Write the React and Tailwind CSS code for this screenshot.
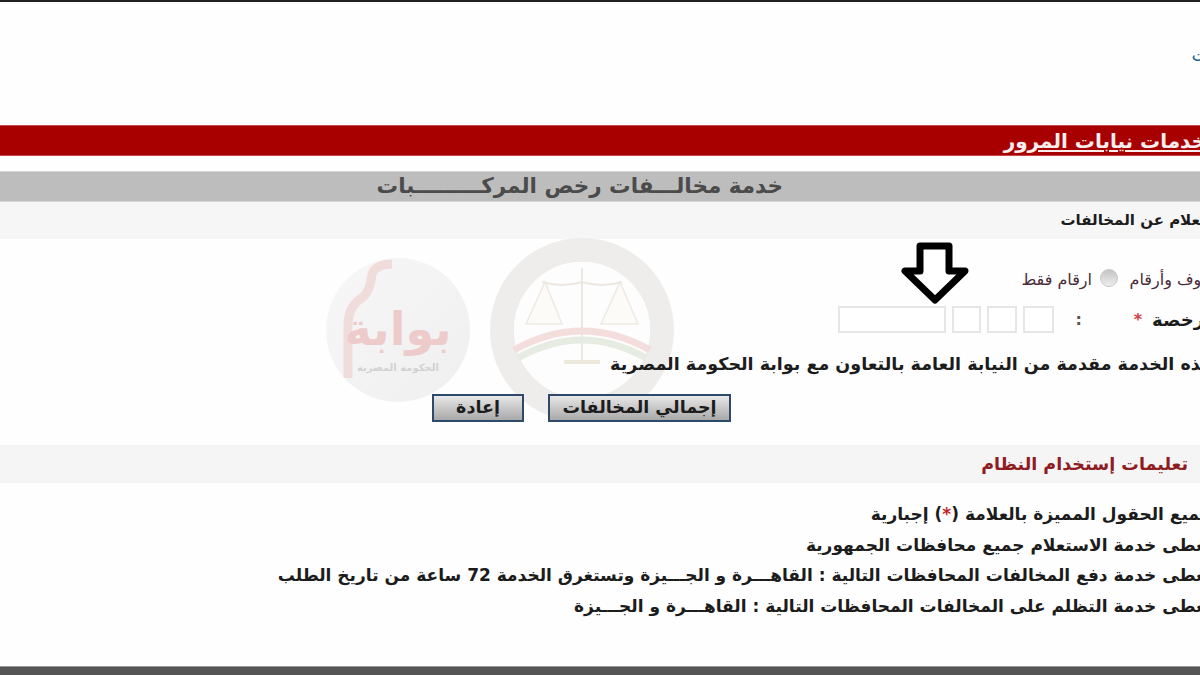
import React from 'react';

const notes = [
    <>جميع الحقول المميزة بالعلامة (<span className="text-[#c0272d]">*</span>) إجبارية</>,
    'تغطى خدمة الاستعلام جميع محافظات الجمهورية',
    'تغطى خدمة دفع المخالفات المحافظات التالية : القاهـــرة و الجـــيزة وتستغرق الخدمة 72 ساعة من تاريخ الطلب',
    'تغطى خدمة التظلم على المخالفات المحافظات التالية : القاهـــرة و الجـــيزة',
];

const Watermarks = () => (
    <div dir="ltr" className="absolute left-[326px] top-[238px] flex items-center gap-[20px] pointer-events-none">
        <div className="relative w-[144px] h-[144px] rounded-full bg-gradient-to-br from-[#f7f7f7] to-[#efefef] flex flex-col items-center overflow-hidden">
            <svg className="absolute left-0 top-0" width="144" height="144" viewBox="0 0 144 144" fill="none">
                <path d="M22 120V68Q22 48 36 40Q44 34 46 16Q50 6 66 6" stroke="#f1dcdc" strokeWidth="9" />
            </svg>
            <span dir="rtl" className="relative font-bold text-[46px] leading-none text-[#eecbcb] mt-[48px] whitespace-nowrap">بوابة</span>
            <span dir="rtl" className="relative font-bold text-[10px] text-[#d2d2d2] mt-[8px] whitespace-nowrap">الحكومة المصرية</span>
        </div>
        <svg width="184" height="184" viewBox="0 0 184 184" fill="none">
            <circle cx="92" cy="92" r="80" stroke="#efedeb" strokeWidth="24" />
            <circle cx="92" cy="92" r="68" fill="#fdfdfd" />
            <path d="M92 30V122M52 44Q72 50 92 44Q112 50 132 44" stroke="#ece8e0" strokeWidth="2" />
            <path d="M55 44L36 86H72ZM130 44L111 86H148Z" stroke="#eeeae2" strokeWidth="1.5" fill="#fcfbf8" />
            <path d="M74 124H110" stroke="#eee9dd" strokeWidth="4" />
            <path d="M24 112Q92 74 160 112" stroke="#f3dddd" strokeWidth="7" />
            <path d="M28 120Q92 84 156 120" stroke="#e6ece2" strokeWidth="7" />
        </svg>
    </div>
);

const DownArrow = () => (
    <svg className="absolute left-[900px] top-[241px]" width="70" height="64" viewBox="0 0 70 64" fill="#fff" stroke="#000" strokeWidth="7" strokeLinejoin="round">
        <path d="M20 5H49V30H65L35 59L5 30H20Z" />
    </svg>
);

const App = () => {
    return (
        <div dir="rtl" className="relative w-[1200px] h-[675px] overflow-hidden bg-[#fefefe] font-['DejaVu_Sans',sans-serif] text-[#1c1c1c] flex flex-col">
            <div className="h-[2px] bg-[#222] shrink-0" />

            {/* header */}
            <div className="h-[123px] shrink-0 pt-[42px]">
                <p className="-mr-[55px] text-[18px] leading-[22px] text-[#2a6496]">الخدمات</p>
            </div>

            <div className="h-[31px] shrink-0 bg-[#a80000] border-y border-[#c9464a] flex items-center">
                <a className="-mr-[6px] text-[20px] font-bold text-[#fbeeee] underline underline-offset-2 whitespace-nowrap">خدمات نيابات المرور</a>
            </div>

            <div className="h-[15px] shrink-0" />

            <div className="h-[31px] shrink-0 bg-[#bdbdbd] border-y border-[#d6d6d6] flex items-center">
                <h1 className="mr-[417px] text-[21.5px] font-bold text-[#4b4b4b] whitespace-nowrap">خدمة مخالـــفات رخص المركـــــــــبات</h1>
            </div>

            <div className="h-[37px] shrink-0 bg-[#f6f6f6] flex items-center">
                <h2 className="-mr-[26px] text-[15px] font-bold whitespace-nowrap">إستعلام عن المخالفات</h2>
            </div>

            {/* form */}
            <div className="relative z-10 h-[206px] shrink-0 flex flex-col">
                <div className="flex items-center mt-[30px] h-[22px] text-[16px] text-[#4a2b3a]">
                    <span className="-mr-[20px] w-[90px] shrink-0 whitespace-nowrap">حروف وأرقام</span>
                    <span className="mr-[12px] ml-[8px] -mt-[4px] w-[18px] h-[18px] rounded-full bg-gradient-to-b from-[#c4c4c4] to-[#eeeeee] border border-[#c8c8c8] shrink-0" />
                    <span className="whitespace-nowrap">ارقام فقط</span>
                </div>

                <div className="flex items-center mt-[15px] h-[27px]">
                    <span className="w-[52px] -mr-[4px] shrink-0 text-[18px] font-bold whitespace-nowrap">رخصة</span>
                    <span className="w-[12px] mr-[10px] shrink-0 text-[#d23c48] font-bold text-[16px]">*</span>
                    <span className="w-[76px] pr-[48px] shrink-0 text-[16px] font-bold text-[#555]">:</span>
                    <div className="flex gap-[6px] h-[27px]">
                        <input aria-label="1" className="w-[31px] bg-white border-2 border-[#e6e6e6]" />
                        <input aria-label="2" className="w-[30px] bg-white border-2 border-[#e6e6e6]" />
                        <input aria-label="3" className="w-[29px] bg-white border-2 border-[#e6e6e6]" />
                        <input aria-label="4" className="w-[108px] bg-white border-2 border-[#e6e6e6]" />
                    </div>
                </div>

                <p className="mt-[19px] -mr-[13px] text-[17.5px] leading-[24px] font-bold whitespace-nowrap">هذه الخدمة مقدمة من النيابة العامة بالتعاون مع بوابة الحكومة المصرية</p>

                <div className="flex gap-[24px] mt-[18px] mr-[469px]">
                    <button className="w-[183px] h-[28px] border-2 border-[#2d4a6b] bg-gradient-to-b from-[#e8e8e8] to-[#a9a9a9] text-[17.5px] leading-none font-bold">إجمالي المخالفات</button>
                    <button className="w-[92px] h-[28px] border-2 border-[#2d4a6b] bg-gradient-to-b from-[#e8e8e8] to-[#a9a9a9] text-[17.5px] leading-none font-bold">إعادة</button>
                </div>
            </div>

            {/* instructions */}
            <div className="h-[38px] shrink-0 bg-[#f5f5f5] flex items-center pr-[12px]">
                <h3 className="text-[17.5px] font-bold text-[#8e1c22] whitespace-nowrap">تعليمات إستخدام النظام</h3>
            </div>

            <ul className="pt-[16px] -mr-[12px] flex flex-col grow">
                {notes.map((note, i) => (
                    <li key={i} className="h-[30.5px] text-[17px] leading-[30px] font-bold whitespace-nowrap">{note}</li>
                ))}
            </ul>

            <div className="h-[9px] shrink-0 bg-[#555] border-t border-[#999]" />

            <Watermarks />
            <DownArrow />
        </div>
    );
};

export default App;
